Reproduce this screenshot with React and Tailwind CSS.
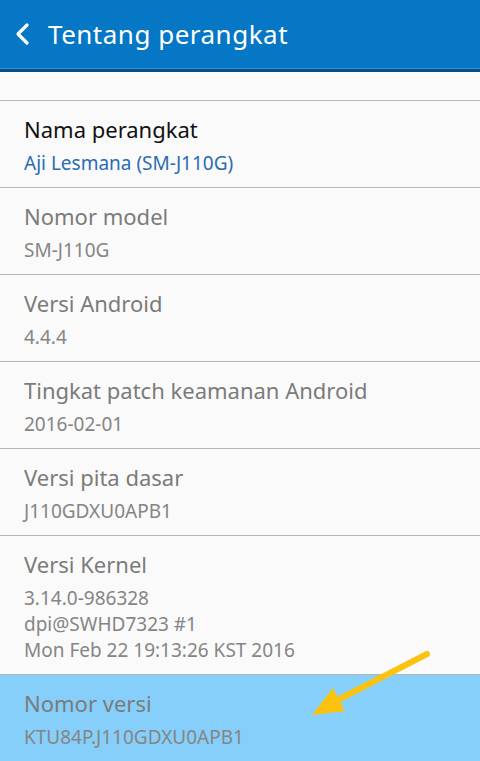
import React from 'react';

const items = [
  { title: 'Nama perangkat', lines: ['Aji Lesmana (SM-J110G)'], active: true },
  { title: 'Nomor model', lines: ['SM-J110G'] },
  { title: 'Versi Android', lines: ['4.4.4'] },
  { title: 'Tingkat patch keamanan Android', lines: ['2016-02-01'] },
  { title: 'Versi pita dasar', lines: ['J110GDXU0APB1'] },
  {
    title: 'Versi Kernel',
    lines: ['3.14.0-986328', 'dpi@SWHD7323 #1', 'Mon Feb 22 19:13:26 KST 2016'],
    tall: true,
  },
  { title: 'Nomor versi', lines: ['KTU84P.J110GDXU0APB1'], highlight: true },
];

const InfoRow = ({ title, lines, active, highlight, tall }) => (
  <div
    className={`box-border px-6 pt-[12px] border-b border-[#b4b4b4] overflow-hidden ${
      tall ? 'h-[139px]' : 'h-[87px]'
    } ${highlight ? 'bg-[#86cffa]' : ''}`}
  >
    <div className={`text-[22px] leading-[32px] ${active ? 'text-[#111111]' : 'text-[#7b7b7b]'}`}>
      {title}
    </div>
    <div className="mt-[5px]">
      {lines.map((line) => (
        <div
          key={line}
          className={`text-[19px] leading-[26px] ${active ? 'text-[#2a6cb4]' : 'text-[#858585]'}`}
        >
          {line}
        </div>
      ))}
    </div>
  </div>
);

export default function App() {
  return (
    <div
      className="relative w-[480px] h-[761px] overflow-hidden bg-[#fafafa]"
      style={{ fontFamily: '"Noto Sans", "Open Sans", sans-serif' }}
    >
      <header className="h-[68px] bg-[#0677c4] flex items-center pl-[14px] text-white">
        <svg width="16" height="24" viewBox="0 0 16 24" className="mr-[18px]">
          <path d="M13 3 L4 12 L13 21" fill="none" stroke="white" strokeWidth="3.2" strokeLinecap="round" strokeLinejoin="round" />
        </svg>
        <h1 className="text-[26px] tracking-[0.5px]">Tentang perangkat</h1>
      </header>
      <div className="h-px bg-[#3a8fd0]" />
      <div className="h-[3px] bg-[#0a4e8a]" />
      <div className="h-[28px]" />
      <div className="border-t border-[#b4b4b4]">
        {items.map((item) => (
          <InfoRow key={item.title} {...item} />
        ))}
      </div>

      {/* pointer arrow over the build number row */}
      <svg className="absolute left-0 top-0 pointer-events-none" width="480" height="761">
        <line x1="427" y1="654" x2="330" y2="704" stroke="#fbc20f" strokeWidth="6" strokeLinecap="round" />
        <polygon points="312,715 333,688 345,711" fill="#fbc20f" />
      </svg>
    </div>
  );
}
